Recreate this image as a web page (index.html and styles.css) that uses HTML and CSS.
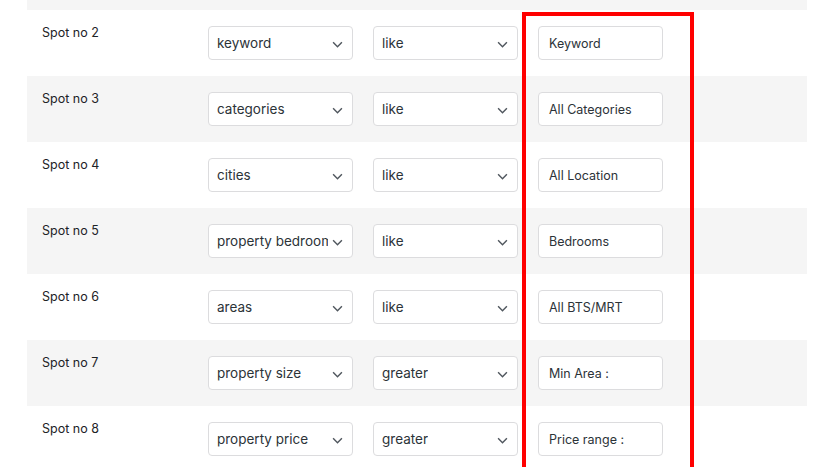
FILE: index.html
```html
<!DOCTYPE html>
<html lang="en">
<head>
	<meta charset="UTF-8">
	<title>Search spots</title>
	<link rel="stylesheet" href="styles.css">
</head>
<body>
	<div class="wrap">
		<div class="spots">
			<div class="row alt top"></div>

			<div class="row">
				<div class="label">Spot no 2</div>
				<div class="select"><span>keyword</span><svg class="chev" viewBox="0 0 10 6"><path d="M1 1l4 4 4-4"/></svg></div>
				<div class="select"><span>like</span><svg class="chev" viewBox="0 0 10 6"><path d="M1 1l4 4 4-4"/></svg></div>
				<div class="field">Keyword</div>
			</div>

			<div class="row alt">
				<div class="label">Spot no 3</div>
				<div class="select"><span>categories</span><svg class="chev" viewBox="0 0 10 6"><path d="M1 1l4 4 4-4"/></svg></div>
				<div class="select"><span>like</span><svg class="chev" viewBox="0 0 10 6"><path d="M1 1l4 4 4-4"/></svg></div>
				<div class="field">All Categories</div>
			</div>

			<div class="row">
				<div class="label">Spot no 4</div>
				<div class="select"><span>cities</span><svg class="chev" viewBox="0 0 10 6"><path d="M1 1l4 4 4-4"/></svg></div>
				<div class="select"><span>like</span><svg class="chev" viewBox="0 0 10 6"><path d="M1 1l4 4 4-4"/></svg></div>
				<div class="field">All Location</div>
			</div>

			<div class="row alt">
				<div class="label">Spot no 5</div>
				<div class="select"><span>property bedrooms</span><svg class="chev" viewBox="0 0 10 6"><path d="M1 1l4 4 4-4"/></svg></div>
				<div class="select"><span>like</span><svg class="chev" viewBox="0 0 10 6"><path d="M1 1l4 4 4-4"/></svg></div>
				<div class="field">Bedrooms</div>
			</div>

			<div class="row">
				<div class="label">Spot no 6</div>
				<div class="select"><span>areas</span><svg class="chev" viewBox="0 0 10 6"><path d="M1 1l4 4 4-4"/></svg></div>
				<div class="select"><span>like</span><svg class="chev" viewBox="0 0 10 6"><path d="M1 1l4 4 4-4"/></svg></div>
				<div class="field">All BTS/MRT</div>
			</div>

			<div class="row alt">
				<div class="label">Spot no 7</div>
				<div class="select"><span>property size</span><svg class="chev" viewBox="0 0 10 6"><path d="M1 1l4 4 4-4"/></svg></div>
				<div class="select"><span>greater</span><svg class="chev" viewBox="0 0 10 6"><path d="M1 1l4 4 4-4"/></svg></div>
				<div class="field">Min Area :</div>
			</div>

			<div class="row">
				<div class="label">Spot no 8</div>
				<div class="select"><span>property price</span><svg class="chev" viewBox="0 0 10 6"><path d="M1 1l4 4 4-4"/></svg></div>
				<div class="select"><span>greater</span><svg class="chev" viewBox="0 0 10 6"><path d="M1 1l4 4 4-4"/></svg></div>
				<div class="field">Price range :</div>
			</div>

			<div class="highlight"></div>
		</div>
	</div>
</body>
</html>
```

FILE: styles.css
```css
html, body {
	margin: 0;
	padding: 0;
	background: #fff;
	overflow: hidden;
}

body {
	font-family: "Inter", "Noto Sans", "Liberation Sans", sans-serif;
	color: #1d2327;
}

.wrap {
	padding: 0 13px 0 27px;
}

.spots {
	position: relative;
	margin-top: -56px;
}

.row {
	display: grid;
	grid-template-columns: 161px 145px 145px 125px;
	column-gap: 20px;
	height: 66px;
	box-sizing: border-box;
	padding-top: 16px;
	background: #fff;
}
.row.alt { background: #f5f5f5; }

.label {
	padding: 0 0 0 15px;
	margin-top: -2px;
	font-size: 12.5px;
	line-height: 18px;
	color: #1d2327;
}

.select, .field {
	height: 34px;
	box-sizing: border-box;
	border: 1px solid #dcdcde;
	border-radius: 4px;
	background: #fff;
	font-size: 13.5px;
	color: #2c3338;
	display: flex;
	align-items: center;
}

.select {
	padding: 0 24px 0 8px;
	position: relative;
}
.select span {
	white-space: nowrap;
	overflow: hidden;
}

.chev {
	position: absolute;
	right: 9px;
	top: 14px;
	width: 11px;
	height: 7px;
	fill: none;
	stroke: #50575e;
	stroke-width: 1.3;
}

.field {
	padding: 0 10px 0 10px;
	font-size: 12.5px;
}

.highlight {
	position: absolute;
	left: 495px;
	top: 68px;
	width: 172px;
	height: 480px;
	box-sizing: border-box;
	border: 4px solid #ff0000;
	pointer-events: none;
}
```
